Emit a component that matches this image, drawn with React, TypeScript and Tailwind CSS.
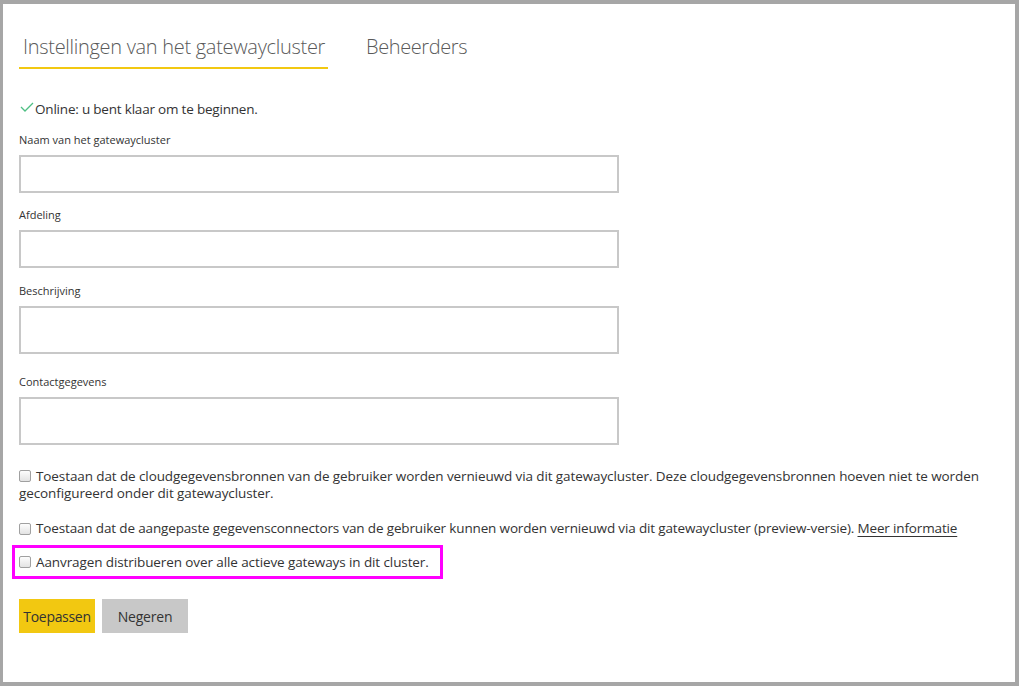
import React from "react";

function Box() {
  return (
    <span className="inline-block w-[12px] h-[12px] shrink-0 rounded-[2px] border border-[#a0a0a0] bg-gradient-to-b from-[#fdfdfd] to-[#e3e3e3]" />
  );
}

function Field({ label, h, labelGap }: { label: string; h: string; labelGap: string }) {
  return (
    <div className={labelGap}>
      <div className="text-[11px] leading-[16px] text-[#333]">{label}</div>
      <div className={`mt-[7px] w-[600px] ${h} border-2 border-[#c8c8c8] bg-white`} />
    </div>
  );
}

export default function App() {
  return (
    <div
      className="w-[1019px] h-[686px] bg-[#a6a6a6] pt-[4px] pl-[3px] pr-[4px] pb-[4px]"
      style={{ fontFamily: '"Open Sans", "Noto Sans", sans-serif' }}
    >
      <div className="w-full h-full bg-white pl-[16px] overflow-hidden">
        <div className="flex items-end mt-[29px]">
          <div className="w-[309px] pl-[4px] pb-[6px] border-b-2 border-[#f2c811] text-[20px] leading-[28px] font-light text-[#5a5a5a] whitespace-nowrap tracking-[-0.3px]">
            Instellingen van het gatewaycluster
          </div>
          <div className="ml-[38px] pb-[8px] text-[20px] leading-[28px] font-light text-[#5a5a5a] tracking-[-0.4px]">
            Beheerders
          </div>
        </div>

        <div className="mt-[30px] flex items-center text-[13.5px] leading-[20px] text-[#333]">
          <svg width="14" height="10" viewBox="0 0 14 10" className="ml-[1px] mr-[1px] -mt-[4px]">
            <path d="M1 5 L5 9 L13 1" fill="none" stroke="#4fbf84" strokeWidth="1.3" />
          </svg>
          <span className="tracking-[-0.2px]">Online: u bent klaar om te beginnen.</span>
        </div>

        <Field label="Naam van het gatewaycluster" h="h-[38px]" labelGap="mt-[13px]" />
        <Field label="Afdeling" h="h-[38px]" labelGap="mt-[14px]" />
        <Field label="Beschrijving" h="h-[48px]" labelGap="mt-[15px]" />
        <Field label="Contactgegevens" h="h-[48px]" labelGap="mt-[20px]" />

        <div className="mt-[23px] pr-[24px] text-[13.5px] leading-[17px] text-[#333] tracking-[-0.1px]">
          <span className="inline-flex align-middle mr-[5px] -mt-[2px]"><Box /></span>
          Toestaan dat de cloudgegevensbronnen van de gebruiker worden vernieuwd via dit gatewaycluster. Deze cloudgegevensbronnen hoeven niet te worden geconfigureerd onder dit gatewaycluster.
        </div>

        <div className="mt-[18px] flex items-center gap-[5px] text-[13.5px] leading-[17px] text-[#333] tracking-[-0.15px] whitespace-nowrap">
          <Box />
          <span>
            Toestaan dat de aangepaste gegevensconnectors van de gebruiker kunnen worden vernieuwd via dit gatewaycluster (preview-versie).{" "}
            <span className="underline underline-offset-[3px] decoration-[#333]">Meer informatie</span>
          </span>
        </div>

        <div className="mt-[8px] -ml-[7px] w-[431px] h-[34px] border-[3px] border-[#ff00ff] flex items-center pl-[4px] gap-[5px] text-[13.5px] leading-[17px] text-[#333] tracking-[-0.1px] whitespace-nowrap">
          <Box />
          <span>Aanvragen distribueren over alle actieve gateways in dit cluster.</span>
        </div>

        <div className="mt-[20px] flex gap-[7px]">
          <button className="w-[76px] h-[34px] bg-[#f2c811] text-[14px] text-[#333] tracking-[-0.3px]">Toepassen</button>
          <button className="w-[86px] h-[34px] bg-[#c8c8c8] text-[14px] text-[#333] tracking-[-0.2px]">Negeren</button>
        </div>
      </div>
    </div>
  );
}
